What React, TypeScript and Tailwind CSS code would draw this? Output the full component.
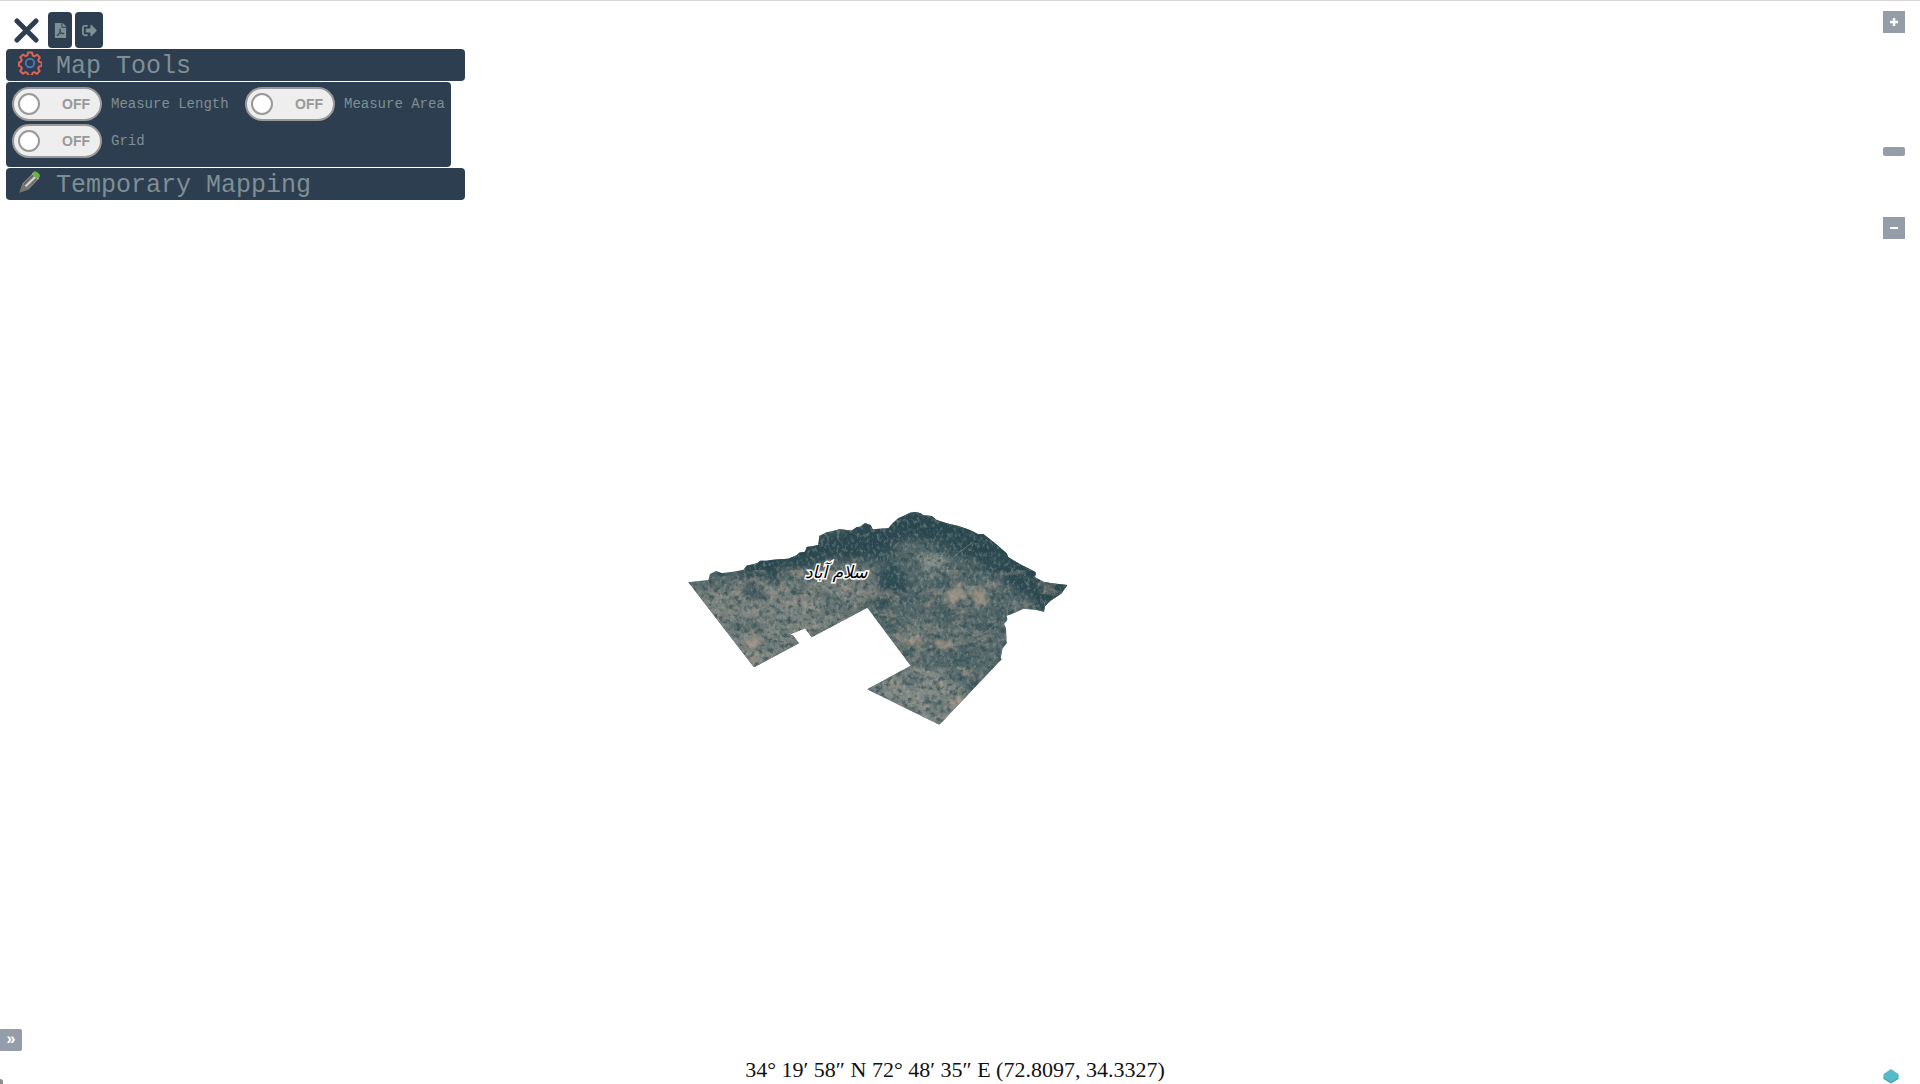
import { useState } from "react";
import { FaFilePdf, FaSignOutAlt } from "react-icons/fa";

const OUTLINE =
  "M25 247 L85 240 90 222 108 213 125 220 160 215 190 210 200 197 232 190 240 182 260 182 280 179 300 178 325 176 350 166 358 158 375 155 380 141 400 138 415 135 418 108 440 97 460 93 480 87 500 90 515 92 530 81 540 80 555 69 572 75 578 88 600 86 625 85 638 70 655 55 675 46 690 38 705 35 722 40 730 46 755 48 770 60 800 70 835 78 870 90 895 103 910 102 945 130 980 160 985 172 1025 195 1068 217 1065 232 1090 245 1115 250 1162 255 1145 280 1112 302 1095 318 1092 335 1070 330 1030 326 1005 338 980 347 982 360 972 372 978 385 980 430 968 445 962 475 965 478 778 674 562 568 692 497 562 323 395 412 375 385 333 402 328 395 330 403 340 407 357 430 222 502Z";

function Terrain() {
  return (
    <svg viewBox="0 0 1200 720" className="block w-full" aria-label="Islamabad imagery" role="img">
      <defs>
        <clipPath id="outline">
          <path d={OUTLINE} />
        </clipPath>
        <filter id="soft" x="-50%" y="-50%" width="200%" height="200%">
          <feTurbulence type="fractalNoise" baseFrequency="0.03" numOctaves="3" seed="9" result="n" />
          <feDisplacementMap in="SourceGraphic" in2="n" scale="70" xChannelSelector="R" yChannelSelector="G" />
          <feGaussianBlur stdDeviation="11" />
        </filter>
        <filter id="blotch" x="-50%" y="-50%" width="200%" height="200%">
          <feTurbulence type="fractalNoise" baseFrequency="0.06" numOctaves="3" seed="3" result="n" />
          <feDisplacementMap in="SourceGraphic" in2="n" scale="60" xChannelSelector="R" yChannelSelector="G" />
          <feGaussianBlur stdDeviation="3" />
        </filter>
        <filter id="light" x="0" y="0" width="100%" height="100%" colorInterpolationFilters="sRGB">
          <feTurbulence type="fractalNoise" baseFrequency="0.1 0.07" numOctaves="4" seed="7" />
          <feColorMatrix values="0 0 0 0 0.72  0 0 0 0 0.72  0 0 0 0 0.68  3.6 0 0 0 -1.75" />
        </filter>
        <filter id="dark" x="0" y="0" width="100%" height="100%" colorInterpolationFilters="sRGB">
          <feTurbulence type="fractalNoise" baseFrequency="0.06 0.07" numOctaves="4" seed="21" />
          <feColorMatrix values="0 0 0 0 0.17  0 0 0 0 0.28  0 0 0 0 0.31  0 3.6 0 0 -1.7" />
        </filter>
        <filter id="patches" x="0" y="0" width="100%" height="100%" colorInterpolationFilters="sRGB">
          <feTurbulence type="fractalNoise" baseFrequency="0.012 0.02" numOctaves="5" seed="4" />
          <feColorMatrix values="0 0 0 0 0.20  0 0 0 0 0.32  0 0 0 0 0.34  0 0 4 0 -1.9" />
        </filter>
        <filter id="warm" x="0" y="0" width="100%" height="100%" colorInterpolationFilters="sRGB">
          <feTurbulence type="fractalNoise" baseFrequency="0.015 0.03" numOctaves="5" seed="12" />
          <feColorMatrix values="0 0 0 0 0.66  0 0 0 0 0.61  0 0 0 0 0.56  0 5 0 0 -2.7" />
        </filter>
      </defs>
      <g clipPath="url(#outline)">
        <rect width="1200" height="720" fill="#55686a" />
        <g filter="url(#soft)">
          <path d="M100 200 L400 110 600 60 720 20 900 70 1080 200 1190 250 1120 350 1040 300 960 230 850 170 760 120 640 130 600 180 480 180 360 200 250 240Z" fill="#2b4750" />
          <path d="M560 250 L640 190 690 230 680 300 600 310Z" fill="#2f4b55" />
          <path d="M10 270 L320 240 420 380 220 530Z" fill="#7a827e" />
          <path d="M330 230 L560 190 600 250 560 330 400 410Z" fill="#78807c" />
          <path d="M150 240 L240 230 250 290 200 310Z" fill="#4a5d62" />
          <path d="M720 170 L800 150 790 210 730 220Z" fill="#87908c" />
          <path d="M790 260 L920 250 930 320 800 320Z" fill="#6c7774" />
          <path d="M590 350 L860 380 870 440 640 450Z" fill="#6e7975" />
          <path d="M540 570 L700 500 860 560 860 620 780 700Z" fill="#828985" />
        </g>
        <rect width="1200" height="720" filter="url(#patches)" opacity="0.45" />
        <rect y="210" width="1200" height="510" filter="url(#warm)" opacity="0.45" />
        <rect width="1200" height="720" filter="url(#dark)" opacity="0.65" />
        <rect width="1200" height="720" filter="url(#light)" opacity="0.34" />
        <g fill="#b5a08e" opacity="0.6" filter="url(#blotch)">
          <path d="M795 290 l20 -28 38 -4 -8 22 12 12 -28 14 -30 4z" />
          <path d="M866 286 l14 -18 40 4 -6 18 6 14 -28 4z" />
          <path d="M680 418 l44 -10 14 12 -24 18 -32 -4z" />
          <path d="M745 420 l64 8 30 14 -60 4z" />
          <path d="M730 304 l28 4 -2 14 -28 -2z" />
          <path d="M190 425 l30 -26 28 20 -26 24z" />
          <path d="M790 605 l50 -14 14 10 -46 18z" />
        </g>
        <path
          d="M820 370 L885 408 920 395 950 370 M800 310 L860 280 M820 170 L880 125 M440 260 L480 310"
          fill="none"
          stroke="#97a19b"
          strokeWidth="3"
          opacity="0.45"
        />
      </g>
    </svg>
  );
}

function GearIcon() {
  return (
    <svg viewBox="0 0 24 24" className="size-6" fill="none" aria-hidden="true">
      <path
        d="M10 1.5h4l.7 3 1.8.8 2.7-1.6 2.6 2.7-1.5 2.7.7 1.8 2.7.7v3.3l-2.8.8-.8 1.8 1.5 2.6-2.6 2.7-2.7-1.6-1.7.8-.8 2.5h-3.6l-.9-2.6-1.8-.8-2.6 1.6-2.6-2.6 1.5-2.7-.8-1.8-2-.7v-3.5l2-.7.8-1.8-1.5-2.6 2.6-2.7 2.7 1.5 1.8-.8z"
        stroke="#df6356"
        strokeWidth="2"
        strokeLinejoin="round"
      />
      <circle cx="12" cy="12" r="4.2" stroke="#4779ae" strokeWidth="2" />
    </svg>
  );
}

function PencilIcon() {
  return (
    <svg viewBox="0 0 24 24" className="size-6" aria-hidden="true">
      <path d="M1.5 22.5 L4.5 13.5 14.5 3.5 20.5 9 10.5 19.5Z" fill="#8d8d8b" />
      <path d="M1.5 22.5 L4.5 13.5 6.5 15.5 8 17.5 10.5 19.5Z" fill="#777572" />
      <path d="M6 14.5 L15.5 5" stroke="#5f6060" strokeWidth="1.5" />
      <path d="M7.7 16.3 L17.3 6.7" stroke="#e3e3e1" strokeWidth="1.6" />
      <path d="M9.5 18 L19 8.5" stroke="#686969" strokeWidth="1.3" />
      <path d="M14.5 3.5 L20.5 9" stroke="#c9cbc8" strokeWidth="1.5" />
      <ellipse cx="18.3" cy="4.8" rx="4" ry="2.6" transform="rotate(42 18.3 4.8)" fill="#68b63c" />
    </svg>
  );
}

function Toggle({ label }: { label: string }) {
  const [on, setOn] = useState(false);
  return (
    <label className="flex cursor-pointer items-center gap-[9px] whitespace-nowrap text-sm">
      <input type="checkbox" className="peer sr-only" checked={on} onChange={() => setOn(!on)} />
      <span
        className={
          "flex h-[34px] w-[90px] shrink-0 items-center justify-between rounded-full border-2 border-[#999] bg-[#eee] pr-2.5 pl-1 " +
          (on ? "flex-row-reverse" : "")
        }
      >
        <span className="size-[22px] rounded-full border-2 border-[#999] bg-white" />
        <span className="font-['Liberation_Sans',sans-serif] text-sm font-bold text-[#999]">{on ? "ON" : "OFF"}</span>
      </span>
      <span>{label}</span>
    </label>
  );
}

const header =
  "flex h-8 w-full items-start gap-3.5 rounded bg-[#2d3e50] pt-0.5 pl-3 text-left text-[25px] leading-8";
const square = "flex size-[22px] items-center justify-center bg-[#959da8] text-white";

export default function App() {
  const [open, setOpen] = useState(true);
  const [zoom, setZoom] = useState(65);
  return (
    <main className="relative flex min-h-screen flex-col overflow-hidden border-t border-[#d5d5d5] bg-white">
      <div className="absolute top-[499px] left-[680px] w-[400px]">
        <Terrain />
        <span
          dir="rtl"
          lang="ur"
          className="absolute top-14 left-[125px] font-['DejaVu_Sans',sans-serif] text-[17px] leading-8 whitespace-nowrap text-black italic [-webkit-text-stroke:3px_white] [paint-order:stroke_fill]"
        >
          سلام آباد
        </span>
      </div>

      <div className="relative flex flex-1 items-start justify-between">
        <aside className="flex w-[465px] flex-col pt-[11px] pl-1.5 font-['Liberation_Mono',monospace] text-[#7f8f94]">
          <div className="mb-px flex h-9 items-center gap-[3px]">
            <button aria-label="Close" className="mr-1.5 ml-2 flex w-[25px] justify-center">
              <svg viewBox="0 0 25 25" className="size-[25px]" aria-hidden="true">
                <path d="M3 3 L22 22 M22 3 L3 22" stroke="#2d3e50" strokeWidth="5" strokeLinecap="round" />
              </svg>
            </button>
            <button aria-label="Export PDF" className="flex h-9 w-6 items-center justify-center rounded bg-[#2d3e50]">
              <FaFilePdf size={15} />
            </button>
            <button aria-label="Sign out" className="flex h-9 w-7 items-center justify-center rounded bg-[#2d3e50]">
              <FaSignOutAlt size={15} />
            </button>
          </div>
          <div className="flex flex-col gap-px">
            <button className={header} onClick={() => setOpen(!open)}>
              <GearIcon />
              Map Tools
            </button>
            {open && (
              <div className="mr-3.5 grid h-[85px] grid-cols-[233px_1fr] content-start gap-y-[3px] rounded bg-[#2d3e50] pt-[5px] pl-1.5">
                <Toggle label="Measure Length" />
                <Toggle label="Measure Area" />
                <Toggle label="Grid" />
              </div>
            )}
            <button className={header}>
              <PencilIcon />
              Temporary Mapping
            </button>
          </div>
        </aside>

        <div className="flex flex-col pt-2.5 pr-[15px]">
          <button aria-label="Zoom in" className={square}>
            <svg viewBox="0 0 10 10" className="size-2.5" aria-hidden="true">
              <path d="M5 1V9M1 5H9" stroke="white" strokeWidth="2.5" />
            </svg>
          </button>
          <input
            type="range"
            aria-label="Zoom level"
            value={zoom}
            onChange={(e) => setZoom(Number(e.target.value))}
            className="h-[184px] w-[22px] appearance-none bg-transparent [writing-mode:vertical-lr] [&::-webkit-slider-thumb]:h-[9px] [&::-webkit-slider-thumb]:w-[22px] [&::-webkit-slider-thumb]:appearance-none [&::-webkit-slider-thumb]:rounded-xs [&::-webkit-slider-thumb]:bg-[#959da8]"
          />
          <button aria-label="Zoom out" className={square}>
            <svg viewBox="0 0 10 10" className="size-2.5" aria-hidden="true">
              <path d="M1 5H9" stroke="white" strokeWidth="2" />
            </svg>
          </button>
        </div>
      </div>

      <footer className="relative">
        <button
          aria-label="Expand overview"
          className="flex size-[22px] items-center justify-center rounded-r-xs bg-[#959da8] pb-0.5 font-['Liberation_Sans',sans-serif] text-base font-bold text-white"
        >
          »
        </button>
        <div className="grid h-[33px] grid-cols-[1fr_auto_1fr] items-end">
          <span className="h-[5px] w-[3px] rounded-tr bg-[#8d8d8d]" />
          <p className="pr-2.5 pb-0.5 font-['Liberation_Serif',serif] text-[22px] leading-6 text-[#111]">
            34° 19′ 58″ N 72° 48′ 35″ E (72.8097, 34.3327)
          </p>
          <a href="#layers" aria-label="Layers" className="mr-[21px] justify-self-end">
            <svg viewBox="0 0 16 16" className="block size-4" aria-hidden="true">
              <path d="M0.5 7 L8 10 15.5 7 15.5 11 8 15.5 0.5 11Z" fill="#3fa3b2" />
              <path d="M8 1 L15.5 6 15 10 8 14 1 10 0.5 6Z" fill="#58bac8" />
            </svg>
          </a>
        </div>
      </footer>
    </main>
  );
}
